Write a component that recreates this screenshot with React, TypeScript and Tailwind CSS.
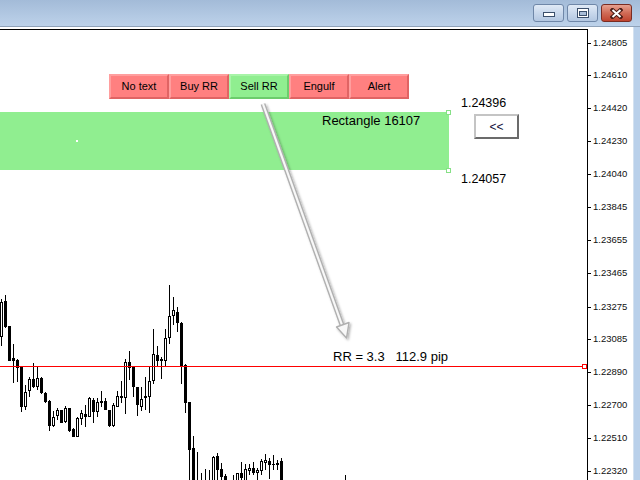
import React from "react";

// [high, bodyTop, bodyBottom, low, bull]
const bars: number[][] = [
  [299, 302, 337, 346, 1],
  [295, 301, 327, 328, 0],
  [326, 326, 361, 361, 0],
  [344, 358, 361, 383, 0],
  [359, 360, 368, 382, 0],
  [367, 367, 407, 412, 0],
  [385, 392, 407, 410, 1],
  [377, 379, 391, 397, 1],
  [363, 379, 387, 388, 0],
  [367, 378, 387, 390, 1],
  [377, 378, 393, 394, 0],
  [392, 393, 402, 403, 0],
  [400, 401, 426, 431, 0],
  [411, 417, 426, 427, 1],
  [408, 410, 416, 420, 1],
  [410, 410, 423, 423, 0],
  [406, 408, 422, 423, 1],
  [408, 408, 431, 432, 0],
  [428, 429, 437, 437, 0],
  [417, 418, 437, 437, 1],
  [410, 413, 419, 425, 1],
  [405, 414, 417, 427, 0],
  [397, 398, 417, 417, 1],
  [398, 400, 412, 423, 0],
  [398, 402, 412, 417, 1],
  [391, 401, 403, 407, 1],
  [398, 401, 410, 410, 0],
  [410, 410, 426, 427, 0],
  [403, 405, 426, 427, 1],
  [391, 396, 407, 407, 1],
  [381, 396, 398, 403, 1],
  [359, 362, 398, 414, 1],
  [351, 362, 368, 380, 0],
  [367, 367, 387, 397, 0],
  [387, 387, 405, 416, 0],
  [387, 399, 407, 411, 1],
  [377, 396, 398, 410, 1],
  [367, 381, 397, 413, 1],
  [329, 354, 381, 384, 1],
  [346, 355, 361, 367, 0],
  [357, 359, 361, 379, 1],
  [329, 338, 361, 367, 1],
  [285, 316, 338, 344, 1],
  [297, 310, 316, 325, 1],
  [307, 312, 323, 332, 0],
  [322, 323, 366, 384, 0],
  [364, 365, 403, 413, 0],
  [402, 402, 450, 490, 0],
  [436, 448, 490, 490, 0],
  [452, 490, 495, 495, 0],
  [473, 490, 495, 495, 0],
  [469, 490, 495, 495, 0],
  [470, 490, 495, 495, 0],
  [456, 457, 490, 490, 1],
  [453, 456, 470, 490, 0],
  [463, 469, 477, 490, 0],
  [474, 476, 490, 490, 0],
  [490, 490, 495, 495, 0],
  [475, 490, 495, 495, 0],
  [473, 473, 490, 490, 1],
  [462, 473, 478, 490, 0],
  [464, 469, 490, 490, 1],
  [464, 468, 471, 475, 1],
  [462, 468, 473, 475, 0],
  [468, 470, 473, 490, 1],
  [459, 461, 471, 475, 1],
  [454, 460, 463, 470, 1],
  [458, 461, 465, 479, 0],
  [455, 464, 465, 470, 1],
  [460, 463, 465, 470, 1],
  [458, 461, 490, 490, 0],
];

const allBars = [...bars.map((b, i) => [i, ...b]), [86, 475, 490, 495, 495, 0]];

const prices: [string, number][] = [
  ["1.24805", 43],
  ["1.24610", 75],
  ["1.24420", 108],
  ["1.24230", 141],
  ["1.24040", 174],
  ["1.23845", 207],
  ["1.23655", 240],
  ["1.23465", 273],
  ["1.23275", 307],
  ["1.23085", 339],
  ["1.22890", 372],
  ["1.22700", 405],
  ["1.22510", 438],
  ["1.22320", 471],
];

const panelButtons = [
  { label: "No text", on: false },
  { label: "Buy RR", on: false },
  { label: "Sell RR", on: true },
  { label: "Engulf", on: false },
  { label: "Alert", on: false },
];

function Candle({ i, hi, top, bot, lo, bull }: { i: number; hi: number; top: number; bot: number; lo: number; bull: boolean }) {
  const x = i * 4;
  const cx = x + 1.5;
  if (bull && bot - top > 1) {
    return (
      <g>
        <line x1={cx} x2={cx} y1={hi} y2={top} stroke="#000" />
        <line x1={cx} x2={cx} y1={bot} y2={lo} stroke="#000" />
        <rect x={x + 0.5} y={top + 0.5} width={2} height={bot - top - 1} fill="#fff" stroke="#000" />
      </g>
    );
  }
  return (
    <g>
      <line x1={cx} x2={cx} y1={hi} y2={lo} stroke="#000" />
      <rect x={x} y={top} width={3} height={Math.max(bot - top, 1)} fill="#000" />
    </g>
  );
}

function ChartDrawing() {
  return (
    <svg className="absolute left-0 top-0" width={587} height={450} viewBox="0 30 587 450">
      <defs>
        <filter id="shadow" x="-30%" y="-10%" width="160%" height="120%">
          <feDropShadow dx="1.5" dy="1.5" stdDeviation="1.2" floodColor="#000" floodOpacity="0.3" />
        </filter>
      </defs>

      {/* rectangle object */}
      <rect x={0} y={112} width={449} height={58} fill="#90ee90" />
      <rect x={76} y={140} width={2} height={2} fill="#fff" />
      <g shapeRendering="crispEdges">
        <rect x={446.5} y={110.5} width={4} height={4} fill="#fff" stroke="#86e086" />
        <rect x={446.5} y={168.5} width={4} height={4} fill="#fff" stroke="#86e086" />
      </g>

      <g shapeRendering="crispEdges">
        {allBars.map(([i, hi, top, bot, lo, bull]) => (
          <Candle key={i} i={i} hi={hi} top={top} bot={bot} lo={lo} bull={bull === 1} />
        ))}
      </g>

      {/* RR line */}
      <g shapeRendering="crispEdges">
        <line x1={0} x2={582} y1={366.5} y2={366.5} stroke="#ff0000" />
        <rect x={582.5} y={364.5} width={4} height={4} fill="#fff" stroke="#ff0000" />
      </g>

      {/* arrow */}
      <g filter="url(#shadow)">
        <line x1={263} y1={104} x2={342} y2={325} stroke="#b0b0b0" strokeWidth={5} />
        <line x1={263} y1={104} x2={342} y2={325} stroke="#f8f8f8" strokeWidth={2.2} />
        <polygon points="346.5,338 336.5,327 349,322.5" fill="#f8f8f8" stroke="#b0b0b0" strokeWidth={1.4} strokeLinejoin="round" />
      </g>
    </svg>
  );
}

function TitleButtons() {
  return (
    <div className="flex h-[27px] items-start justify-end gap-[3px] border-b border-[#8fa2b9] bg-linear-to-b from-[#a3bbd8] to-[#bdd2ea] pr-[8px] pt-[4px]">
      <div className="flex h-[18px] w-[31px] justify-center rounded-[3px] border border-[#6f87a8] bg-linear-to-b from-[#e0eaf6] via-[#c9d8ec] to-[#b3c7e1] pt-[7px]">
        <svg width="12" height="5" viewBox="0 0 12 5">
          <rect x={0.5} y={0.5} width={11} height={4} fill="#fff" stroke="#3b4f6b" />
        </svg>
      </div>
      <div className="flex h-[18px] w-[31px] justify-center rounded-[3px] border border-[#6f87a8] bg-linear-to-b from-[#e0eaf6] via-[#c9d8ec] to-[#b3c7e1] pt-[3px]">
        <svg width="12" height="10" viewBox="0 0 12 10">
          <rect x={0.5} y={0.5} width={11} height={9} fill="#fff" stroke="#3b4f6b" />
          <rect x={2.5} y={3.5} width={7} height={4} fill="#a9bdd7" stroke="#3b4f6b" />
        </svg>
      </div>
      <div className="flex h-[18px] w-[31px] justify-center rounded-[3px] border border-[#7a2c22] bg-linear-to-b from-[#e6a190] via-[#d06b56] to-[#c0432e] pt-[3px]">
        <svg width="13" height="11" viewBox="0 0 13 11">
          <path d="M2.5 2 L10.5 9 M10.5 2 L2.5 9" stroke="#4b1c16" strokeWidth="4" strokeLinecap="square" />
          <path d="M2.5 2 L10.5 9 M10.5 2 L2.5 9" stroke="#fff" strokeWidth="2" />
        </svg>
      </div>
    </div>
  );
}

export default function App() {
  return (
    <div className="flex h-[480px] w-[640px] flex-col overflow-hidden bg-white font-['Liberation_Sans',Arial,sans-serif] text-black">
      <TitleButtons />

      <div className="flex flex-1">
        <div className="flex flex-1 flex-col bg-white">
          <div className="h-[2px]" />
          <div className="flex flex-1">
            {/* chart canvas */}
            <div className="relative w-[587px] overflow-hidden border-t border-black">
              <ChartDrawing />

              <div className="absolute left-[109px] top-[44px] flex">
                {panelButtons.map((b) => (
                  <div
                    key={b.label}
                    className={
                      b.on
                        ? "flex h-[25px] w-[60px] items-center justify-center border-2 border-l-[#a8f4a8] border-t-[#a8f4a8] border-r-[#6ccc6c] border-b-[#6ccc6c] bg-[#90ee90] text-[11px]"
                        : "flex h-[25px] w-[60px] items-center justify-center border-2 border-l-[#ff9e9e] border-t-[#ff9e9e] border-r-[#e06464] border-b-[#e06464] bg-[#ff8080] text-[11px]"
                    }
                  >
                    {b.label}
                  </div>
                ))}
              </div>

              <span className="absolute left-[322px] top-[83px] text-[13px] leading-[15px]">Rectangle 16107</span>
              <span className="absolute left-[461px] top-[66px] text-[12.5px] leading-[15px]">1.24396</span>
              <span className="absolute left-[461px] top-[142px] text-[12.5px] leading-[15px]">1.24057</span>
              <span className="absolute left-[333px] top-[319px] whitespace-pre text-[13px] leading-[15px]">RR = 3.3   112.9 pip</span>

              <div className="absolute left-[474px] top-[84px] flex h-[25px] w-[45px] items-center justify-center border-2 border-l-[#c4c4c4] border-t-[#c4c4c4] border-r-[#6b6b6b] border-b-[#6b6b6b] bg-white text-[12px] text-[#10103a]">
                &lt;&lt;
              </div>
            </div>

            {/* price scale */}
            <div className="relative w-[46px] border-l border-black">
              {prices.map(([p, y]) => (
                <React.Fragment key={p}>
                  <div className="absolute left-0 h-px w-[3px] bg-black" style={{ top: y - 29 }} />
                  <span className="absolute left-[5px] text-[9.5px] leading-[12px] text-[#101010]" style={{ top: y - 35 }}>
                    {p}
                  </span>
                </React.Fragment>
              ))}
            </div>
          </div>
        </div>
        <div className="w-[7px] border-l border-[#d3e1f0] bg-[#b9d0ea]" />
      </div>
    </div>
  );
}
